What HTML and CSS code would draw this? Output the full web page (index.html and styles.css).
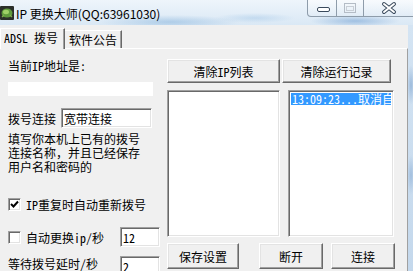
FILE: index.html
```html
<!DOCTYPE html>
<html>
<head>
    <meta charset="utf-8">
    <title>IP 更换大师</title>
    <link rel="stylesheet" href="styles.css">
</head>
<body>
<div class="titlebar">
    <svg class="app-icon" width="14" height="14" viewBox="0 0 14 14">
        <rect x="0" y="0" width="14" height="14" rx="1" fill="#2b2f2a"/>
        <ellipse cx="7" cy="7" rx="5.5" ry="4.5" fill="#5f9a3c"/>
        <ellipse cx="6" cy="6" rx="3" ry="2.2" fill="#9fd067"/>
        <path d="M2 11 L4 9 M12 11 L10 9" stroke="#7fb04c" stroke-width="1.2"/>
    </svg>
    <span class="title">IP 更换大师(QQ:63961030)</span>
    <div class="caption">
        <span class="cap cap-min">
            <svg width="28" height="16" viewBox="0 0 28 16">
                <rect x="9.5" y="7.5" width="12" height="4" rx="1.5" fill="#fff" stroke="#3a4a5c"/>
            </svg>
        </span>
        <span class="cap cap-max">
            <svg width="26" height="16" viewBox="0 0 26 16">
                <rect x="7.5" y="3.5" width="11" height="9" fill="none" stroke="#b4bcc6"/>
                <rect x="9.5" y="6.5" width="7" height="4" fill="none" stroke="#c8ced6"/>
            </svg>
        </span>
        <span class="cap cap-close">
            <svg width="51" height="16" viewBox="0 0 51 16">
                <path d="M20 4 L30 12 M30 4 L20 12" stroke="#3a4a5c" stroke-width="4" stroke-linecap="round"/>
                <path d="M20 4 L30 12 M30 4 L20 12" stroke="#fff" stroke-width="2" stroke-linecap="round"/>
            </svg>
        </span>
    </div>
</div>
<div class="client">
    <div class="client-main">
        <div class="tabs">
            <span class="tab active">ADSL 拨号</span>
            <span class="tab">软件公告</span>
        </div>
        <div class="tab-panel">
            <div class="col-left">
                <div class="lbl-ip">当前IP地址是:</div>
                <div class="ip-show"></div>
                <div class="row-conn">
                    <span>拨号连接</span>
                    <input class="txt conn" type="text" value="宽带连接">
                </div>
                <div class="tip">填写你本机上已有的拨号<br>连接名称，并且已经保存<br>用户名和密码的</div>
                <div class="chk-row first">
                    <span class="chk">
                        <svg width="9" height="9" viewBox="0 0 9 9"><path d="M1 4 L3.5 6.5 L8 1.5" fill="none" stroke="#000" stroke-width="2"/></svg>
                    </span>
                    IP重复时自动重新拨号
                </div>
                <div class="opt-grid">
                    <div class="chk-row"><span class="chk"></span>自动更换ip/秒</div>
                    <input class="txt num" type="text" value="12">
                    <span class="lbl-wait">等待拨号延时/秒</span>
                    <input class="txt num" type="text" value="2">
                </div>
            </div>
            <div class="col-right">
                <div class="btn-row top">
                    <span class="btn b-clear-ip">清除IP列表</span>
                    <span class="btn b-clear-log">清除运行记录</span>
                </div>
                <div class="lists">
                    <div class="list ip-list"></div>
                    <div class="list log-list">
                        <div class="log-item sel">13:09:23...取消自动拨号</div>
                    </div>
                </div>
                <div class="btn-row bottom">
                    <span class="btn b-save">保存设置</span>
                    <span class="btn b-off">断开</span>
                    <span class="btn b-on">连接</span>
                </div>
            </div>
        </div>
    </div>
    <div class="frame-r"></div>
</div>
</body>
</html>
```

FILE: styles.css
```css
body{
    margin: 0;
    width: 413px;
    height: 271px;
    overflow: hidden;
    font-family: "Noto Sans CJK SC", sans-serif;
    font-size: 12px;
    color: #000;
}
.titlebar{
    position: relative;
    height: 25px;
    display: flex;
    align-items: center;
    background:
        radial-gradient(ellipse 70px 7px at 170px 22px, rgba(120,170,215,.45), transparent),
        radial-gradient(ellipse 45px 6px at 355px 21px, rgba(100,150,205,.5), transparent),
        radial-gradient(ellipse 40px 5px at 255px 18px, rgba(140,185,225,.35), transparent),
        linear-gradient(#eef5fb, #dae8f5);
}
.app-icon{
    margin: 1px 1px 0 0;
}
.title{
    font-size: 12px;
    margin-left: 1px;
    padding-top: 1px;
}
.caption{
    position: absolute;
    top: 0;
    left: 307px;
    display: flex;
    height: 17px;
}
.cap{
    display: block;
    height: 16px;
    border: 1px solid #8e9caa;
    border-top: none;
    border-left-width: 0;
    background: linear-gradient(rgba(255,255,255,.55), rgba(225,235,245,.4));
}
.cap svg{
    display: block;
}
.cap-min{
    width: 28px;
    border-left-width: 1px;
    border-bottom-left-radius: 4px;
}
.cap-max{
    width: 26px;
}
.cap-close{
    width: 51px;
    border-bottom-right-radius: 4px;
}
.client{
    display: flex;
    height: 246px;
}
.client-main{
    width: 408px;
    background: #f0f0f0;
    font-feature-settings: "hwid" 1;
}
.frame-r{
    flex: 1;
    background:
        radial-gradient(ellipse 4px 20px at 3px 60px, rgba(120,160,205,.6), transparent),
        radial-gradient(ellipse 4px 20px at 3px 150px, rgba(120,160,205,.5), transparent),
        linear-gradient(#d4e4f3, #c4d8ec);
}
.tabs{
    height: 23px;
    display: flex;
    align-items: flex-end;
}
.tab{
    box-sizing: border-box;
    height: 18px;
    padding: 2px 4px 0 4px;
    line-height: 14px;
    border-top: 1px solid #fff;
    border-right: 1px solid #696969;
    box-shadow: inset -1px 0 #a0a0a0;
}
.tab.active{
    position: relative;
    height: 21px;
    margin-bottom: -1px;
    padding: 2px 6px 0 3px;
    border-left: 1px solid #fff;
    background: #f0f0f0;
}
.tab-panel{
    display: flex;
    gap: 7px;
    height: 222px;
    padding-left: 8px;
    border-top: 1px solid #fff;
    border-right: 1px solid #a0a0a0;
}
.col-left{
    width: 152px;
}
.lbl-ip{
    margin-top: 10px;
    line-height: 14px;
}
.ip-show{
    margin-top: 9px;
    width: 145px;
    height: 14px;
    background: #fff;
}
.txt{
    box-sizing: border-box;
    height: 20px;
    margin: 0;
    padding: 0 2px;
    font: inherit;
    font-feature-settings: "hwid" 1;
    color: #000;
    background: #fff;
    border: 1px solid;
    border-color: #a0a0a0 #fff #fff #a0a0a0;
    box-shadow: inset 1px 1px #696969, inset -1px -1px #e3e3e3;
    outline: none;
}
.row-conn{
    margin-top: 12px;
    display: flex;
    align-items: center;
    gap: 5px;
}
.txt.conn{
    width: 91px;
}
.tip{
    margin-top: 4px;
    line-height: 14px;
    font-feature-settings: normal;
}
.chk-row{
    display: flex;
    align-items: center;
    gap: 5px;
    height: 14px;
}
.chk-row.first{
    margin-top: 23px;
}
.chk{
    box-sizing: border-box;
    width: 13px;
    height: 13px;
    display: flex;
    align-items: center;
    justify-content: center;
    background: #fff;
    border: 1px solid;
    border-color: #a0a0a0 #fff #fff #a0a0a0;
    box-shadow: inset 1px 1px #696969, inset -1px -1px #e3e3e3;
}
.opt-grid{
    margin-top: 16px;
    display: grid;
    grid-template-columns: 112px 40px;
    row-gap: 9px;
    align-items: center;
}
.opt-grid .chk-row{
    height: 20px;
}
.lbl-wait{
    align-self: start;
    margin-top: 1px;
    line-height: 14px;
}
.txt.num{
    width: 40px;
}
.col-right{
    width: 228px;
    padding-top: 10px;
}
.btn-row{
    display: flex;
}
.btn{
    box-sizing: border-box;
    display: flex;
    align-items: center;
    justify-content: center;
    background: #f0f0f0;
    border: 1px solid;
    border-color: #fff #696969 #696969 #fff;
    box-shadow: inset -1px -1px #a0a0a0, inset 1px 1px #e3e3e3;
}
.btn-row.top{
    gap: 2px;
}
.btn-row.top .btn{
    height: 24px;
}
.b-clear-ip{
    width: 113px;
}
.b-clear-log{
    width: 109px;
}
.lists{
    margin-top: 7px;
    display: flex;
    gap: 8px;
}
.list{
    box-sizing: border-box;
    height: 147px;
    padding: 2px 2px 0 2px;
    background: #fff;
    border: 1px solid;
    border-color: #a0a0a0 #fff #fff #a0a0a0;
    box-shadow: inset 1px 1px #696969, inset -1px -1px #e3e3e3;
}
.ip-list{
    width: 113px;
}
.log-list{
    width: 106px;
    overflow: hidden;
}
.log-item{
    height: 12px;
    line-height: 12px;
    white-space: nowrap;
    overflow: hidden;
}
.log-item.sel{
    background: #3399ff;
    color: #fff;
    padding-left: 1px;
}
.btn-row.bottom{
    margin-top: 6px;
}
.btn-row.bottom .btn{
    height: 26px;
}
.b-save{
    width: 72px;
}
.b-off{
    width: 64px;
    margin-left: 20px;
}
.b-on{
    width: 64px;
    margin-left: 8px;
}
```
